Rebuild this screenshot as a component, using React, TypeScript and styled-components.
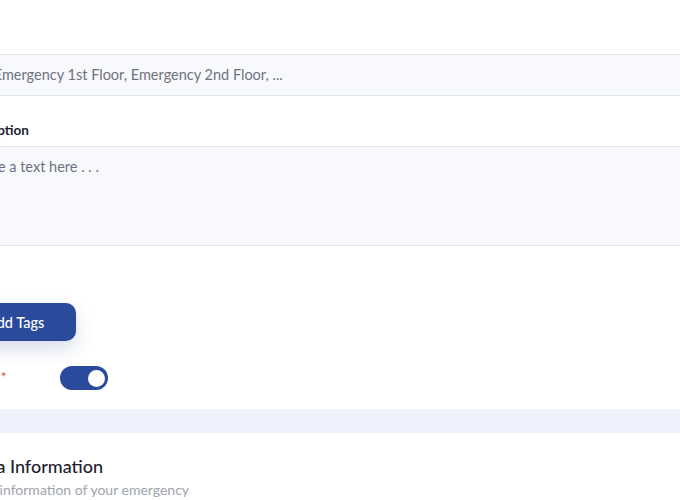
import React from 'react'
import styled, { createGlobalStyle } from 'styled-components'

const GlobalStyle = createGlobalStyle`
  html, body {
    margin: 0;
    padding: 0;
    background: #EFF1FD;
    font-family: Lato, "Noto Sans", sans-serif;
  }
`;

// 화면 (잘린 뷰)

const Viewport = styled.div`
  width: 680px;
  height: 500px;
  overflow: hidden;
  background: #EFF1FD;
`;

const Stack = styled.div`
  margin-left: -45px;
  margin-top: -18px;
  width: 820px;
  display: flex;
  flex-direction: column;
  gap: 24px;
`;

const Card = styled.section<{ $pad: string }>`
  background: #FFF;
  padding: ${(p) => p.$pad};
  display: flex;
  flex-direction: column;
`;

const Helper = styled.p`
  margin: 0;
  height: 20px;
  line-height: 20px;
  font-size: 14px;
  color: #9A9EA8;
  padding-left: 190px;
`;

const Label = styled.p`
  margin: 25px 0 7px 4px;
  line-height: 18px;
  font-size: 13.5px;
  font-weight: 700;
  color: #1E2130;
`;

const Field = styled.div<{ $h: number; $top: number; $indent: number }>`
  margin-top: ${(p) => p.$top}px;
  height: ${(p) => p.$h}px;
  box-sizing: border-box;
  border-top: 1px solid #E2E5EB;
  border-bottom: 1px solid #E2E5EB;
  background: #F8F9FC;
  padding: 10px 16px 10px ${(p) => p.$indent}px;
  font-size: 14.5px;
  line-height: 20px;
  color: #6E7280;
`;

const AddTagsBtn = styled.button`
  margin-top: 57px;
  align-self: flex-start;
  height: 38px;
  padding: 0 32px;
  border: none;
  border-radius: 10px;
  background: #2A4A9B;
  box-shadow: 0 8px 18px rgba(42, 74, 155, 0.18);
  color: #FFF;
  font-family: Lato, "Noto Sans", sans-serif;
  font-size: 14.5px;
  font-weight: 500;
`;

const ToggleRow = styled.div`
  margin-top: 25px;
  display: flex;
  align-items: center;
`;

const RowLabel = styled.span`
  width: 105px;
  font-size: 13px;
  font-weight: 700;
  color: #1E2130;

  span {
    margin-left: 10px;
    position: relative;
    top: -1px;
    color: #E53E3E;
    font-size: 13px;
    font-weight: 400;
  }
`;

const Toggle = styled.div<{ $on: boolean }>`
  width: 48px;
  height: 24px;
  border-radius: 12px;
  background: ${(p) => (p.$on ? '#2A4A9B' : '#C9CDD6')};
  display: flex;
  align-items: center;
  justify-content: ${(p) => (p.$on ? 'flex-end' : 'flex-start')};
  padding: 0 3px;
  box-sizing: border-box;

  &::after {
    content: '';
    width: 17px;
    height: 17px;
    border-radius: 50%;
    background: #FFF;
  }
`;

const SectionTitle = styled.h2`
  margin: 0;
  line-height: 24px;
  font-size: 18px;
  font-weight: 500;
  color: #1E2130;
`;

const SectionSub = styled.p`
  margin: 2px 0 0;
  line-height: 20px;
  font-size: 14px;
  color: #A0A4AD;
`;

function App() {
  return (
    <Viewport>
      <GlobalStyle />
      <Stack>
        <Card $pad="0 0 19px">
          <Helper>gate, entry, lobby, spot, gym, way</Helper>
          <Field $h={42} $top={52} $indent={13}>e.g. Emergency 1st Floor, Emergency 2nd Floor, ...</Field>
          <Label>Description</Label>
          <Field $h={100} $top={0} $indent={20}>Type a text here . . .</Field>
          <AddTagsBtn>Add Tags</AddTagsBtn>
          <ToggleRow>
            <RowLabel>Status<span>*</span></RowLabel>
            <Toggle $on />
          </ToggleRow>
        </Card>
        <Card $pad="21px 0 40px 9px">
          <SectionTitle>Extra Information</SectionTitle>
          <SectionSub>Extra information of your emergency</SectionSub>
        </Card>
      </Stack>
    </Viewport>
  )
}

export default App
